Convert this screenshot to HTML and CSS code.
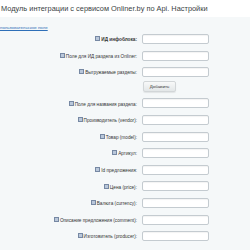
FILE: index.html
```html
<!DOCTYPE html>
<html lang="ru">
<head>
    <meta charset="UTF-8">
    <title>Onliner.by - Настройки</title>
    <link rel="stylesheet" href="styles.css">
</head>
<body>
    <div id="header">
        <h1>Модуль интеграции с сервисом Onliner.by по Api. Настройки</h1>
    </div>

    <div id="content">
        <a href="#" id="userFieldLink">пользовательское поле</a>

        <div class="form">
            <div class="row">
                <label class="required"><span class="hint"></span>ИД инфоблока:</label>
                <input type="text">
            </div>
            <div class="row">
                <label><span class="hint"></span>Поле для ИД раздела из Onliner:</label>
                <input type="text">
            </div>
            <div class="row">
                <label><span class="hint"></span>Выгружаемые разделы:</label>
                <input type="text">
            </div>
            <div class="row button-row">
                <span></span>
                <button type="button">Добавить</button>
            </div>
            <div class="row">
                <label><span class="hint"></span>Поле для названия раздела:</label>
                <input type="text">
            </div>
            <div class="row">
                <label><span class="hint"></span>Производитель (vendor):</label>
                <input type="text">
            </div>
            <div class="row">
                <label><span class="hint"></span>Товар (model):</label>
                <input type="text">
            </div>
            <div class="row">
                <label><span class="hint"></span>Артикул:</label>
                <input type="text">
            </div>
            <div class="row">
                <label><span class="hint"></span>Id предложения:</label>
                <input type="text">
            </div>
            <div class="row">
                <label><span class="hint"></span>Цена (price):</label>
                <input type="text">
            </div>
            <div class="row">
                <label><span class="hint"></span>Валюта (currency):</label>
                <input type="text">
            </div>
            <div class="row">
                <label><span class="hint"></span>Описание предложения (comment):</label>
                <input type="text">
            </div>
            <div class="row">
                <label><span class="hint"></span>Изготовитель (producer):</label>
                <input type="text">
            </div>
        </div>
    </div>
</body>
</html>
```

FILE: styles.css
```css
body {
    font-family: "Liberation Sans", Arial, sans-serif;
    background-color: #f5f8f9;
    color: #333;
    margin: 0;
    padding: 0;
    overflow: hidden;
}

#header {
    background-color: #fff;
    height: 17px;
    padding: 0 0 0 1px;
}

h1 {
    margin: 0;
    font-size: 7.4px;
    font-weight: normal;
    line-height: 17px;
    color: #3a3f44;
}

#content {
    padding: 8px 0 0 0;
}

#userFieldLink {
    display: block;
    font-size: 4.4px;
    line-height: 6px;
    color: #2e6fb8;
    height: 6px;
}

.form {
    display: flex;
    flex-direction: column;
    gap: 6.6px;
    margin-top: 3px;
}

.row {
    display: grid;
    grid-template-columns: 137px 67px;
    column-gap: 5px;
    align-items: center;
}

.row label {
    text-align: right;
    font-size: 4.7px;
    color: #333;
    white-space: nowrap;
}

.row label.required {
    font-weight: bold;
}

.hint {
    display: inline-block;
    width: 3px;
    height: 3px;
    border: 1px solid #7688a3;
    background-color: #b9c7da;
    margin-right: 1px;
    vertical-align: -0.5px;
}

input {
    height: 10px;
    width: 67px;
    box-sizing: border-box;
    border: 1px solid #c4cbd0;
    border-radius: 2px;
    background-color: #fff;
    box-shadow: inset 0 1px 1px rgba(0, 0, 0, 0.05);
    padding: 0;
    margin: 0;
}

.button-row {
    margin-top: -3px;
}

button {
    justify-self: start;
    margin-left: 1px;
    height: 11px;
    width: 33px;
    padding: 0;
    font-family: "Liberation Sans", Arial, sans-serif;
    font-size: 4.4px;
    color: #333;
    border: 1px solid #d2d6d8;
    border-radius: 2px;
    background: linear-gradient(#f8f9f9, #e3e7e8);
    box-shadow: 0 1px 1px rgba(0, 0, 0, 0.08);
}
```
